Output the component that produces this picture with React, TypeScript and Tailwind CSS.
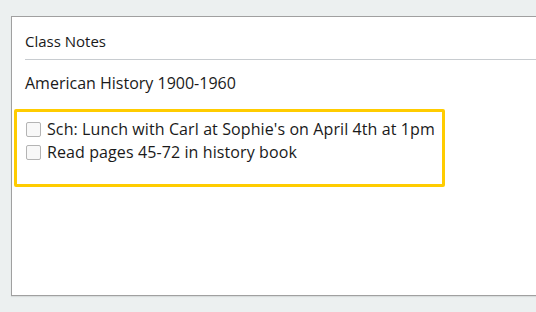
import React from 'react';

const tasks = [
  "Sch: Lunch with Carl at Sophie's on April 4th at 1pm",
  'Read pages 45-72 in history book',
];

export default function App() {
  return (
    <div className="w-[536px] h-[312px] overflow-hidden bg-[#ecf0f0] pt-[16px] pl-[11px] font-['Open_Sans',sans-serif] text-[#1a1a1a]">
      <div className="w-[560px] h-[280px] bg-white border border-[#a0a0a0] shadow-[0_1px_1px_rgba(0,0,0,0.08)]">
        {/* Header */}
        <div className="ml-[13px] pt-[14px]">
          <div className="text-[15px] leading-[20px] h-[28px]">Class Notes</div>
          <div className="border-t border-[#c8ccd0]" />
          <div className="mt-[12px] text-[16px] leading-[22px]">American History 1900-1960</div>
        </div>

        {/* Highlighted task list */}
        <div className="ml-[2px] mt-[15px] w-[431px] h-[78px] border-[3px] border-[#ffcc00] rounded-[2px] pl-[9px] pt-[6px]">
          {tasks.map((t) => (
            <label key={t} className="flex items-center gap-[6px] h-[23px] text-[16px] leading-[23px] tracking-[0.1px]">
              <span className="w-[15px] h-[15px] shrink-0 border border-[#b4b4b4] rounded-[2px] bg-[#f8f8f8]" />
              <span>{t}</span>
            </label>
          ))}
        </div>
      </div>
    </div>
  );
}
